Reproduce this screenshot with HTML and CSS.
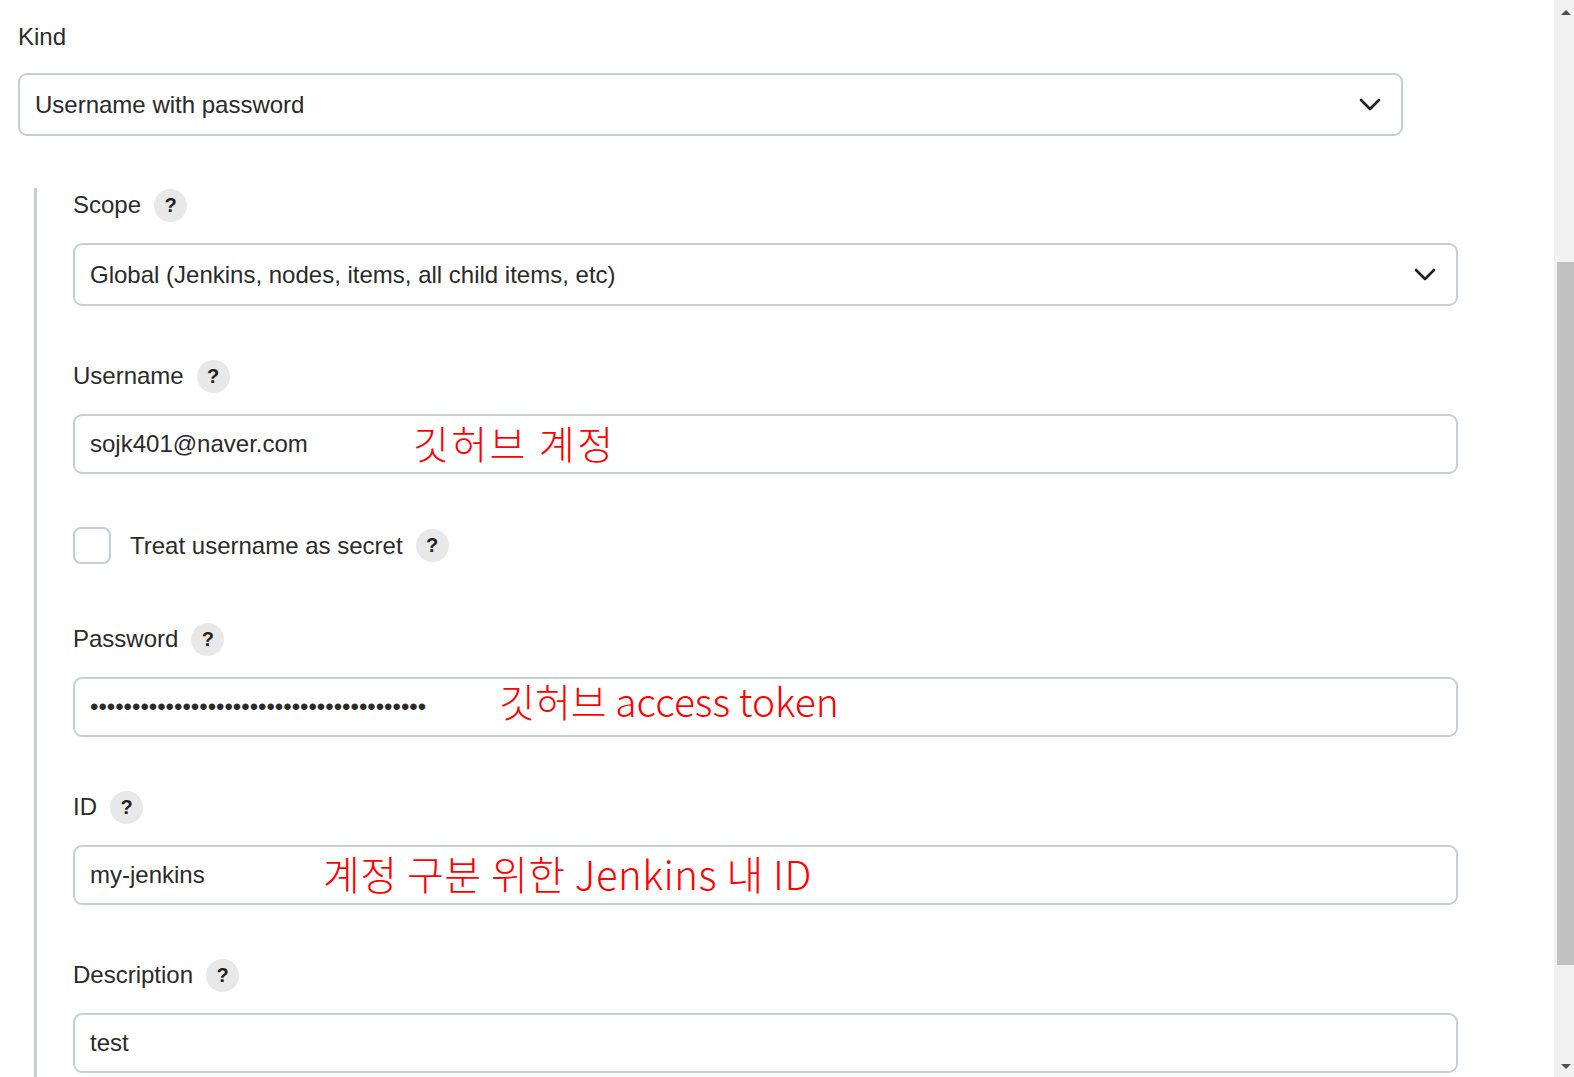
FILE: index.html
```html
<html>
  <head>
    <link rel="stylesheet" href="styles.css">
  </head>
  <body>
    <div class="page">
      <div class="main">
        <div class="kind_label">Kind</div>
        <div class="box select">
          <span>Username with password</span>
          <svg class="chevron" width="22" height="13" viewBox="0 0 22 13"><path d="M2 2 L11 11 L20 2" /></svg>
        </div>

        <div class="nested">
          <div class="field">
            <div class="label_row"><span>Scope</span><span class="help">?</span></div>
            <div class="box select">
              <span>Global (Jenkins, nodes, items, all child items, etc)</span>
              <svg class="chevron" width="22" height="13" viewBox="0 0 22 13"><path d="M2 2 L11 11 L20 2" /></svg>
            </div>
          </div><!-- scope -->

          <div class="field">
            <div class="label_row"><span>Username</span><span class="help">?</span></div>
            <div class="box">
              <span>sojk401@naver.com</span>
              <span class="note note_user">깃허브 계정</span>
            </div>
          </div><!-- username -->

          <div class="check_row">
            <span class="checkbox"></span>
            <span class="check_text">Treat username as secret</span>
            <span class="help">?</span>
          </div><!-- secret -->

          <div class="field">
            <div class="label_row"><span>Password</span><span class="help">?</span></div>
            <div class="box">
              <span class="dots">••••••••••••••••••••••••••••••••••••••••</span>
              <span class="note note_token">깃허브 access token</span>
            </div>
          </div><!-- password -->

          <div class="field">
            <div class="label_row"><span>ID</span><span class="help">?</span></div>
            <div class="box">
              <span>my-jenkins</span>
              <span class="note note_id">계정 구분 위한 Jenkins 내 ID</span>
            </div>
          </div><!-- id -->

          <div class="field">
            <div class="label_row"><span>Description</span><span class="help">?</span></div>
            <div class="box">
              <span>test</span>
            </div>
          </div><!-- description -->
        </div><!-- nested -->
      </div><!-- main -->

      <div class="scrollbar">
        <div class="arrow_box"><span class="arrow arrow_up"></span></div>
        <div class="thumb"></div>
        <div class="track_rest"></div>
        <div class="arrow_box arrow_box_down"><span class="arrow arrow_down"></span></div>
      </div><!-- scrollbar -->
    </div>
  </body>
</html>
```

FILE: styles.css
```css
body { margin: 0; background: #fff; font-family: "Liberation Sans", Arial, sans-serif; color: #2b2b2b; }

.page { display: flex; height: 1077px; overflow: hidden; }
.main { flex: 1; padding: 20px 0 0 18px; overflow: hidden; }

.kind_label { height: 34px; display: flex; align-items: center; font-size: 24px; margin-bottom: 19px; }

.box { position: relative; box-sizing: border-box; width: 1385px; height: 60px; display: flex; align-items: center; padding: 0 20px 0 15px; border: 2px solid #c7ced4; border-radius: 9px; font-size: 24px; color: #2a2a2a; }
.select { height: 63px; justify-content: space-between; padding-left: 15px; }

.chevron { fill: none; stroke: #1f1f1f; stroke-width: 2.6; stroke-linecap: round; stroke-linejoin: round; }

.nested { margin: 52px 0 0 16px; border-left: 3px solid #c9ced3; padding-left: 36px; padding-bottom: 40px; }

.field { margin-bottom: 53px; }
.label_row { height: 34px; display: flex; align-items: center; gap: 13px; font-size: 24px; margin-bottom: 21px; }

.help { width: 33px; height: 33px; border-radius: 50%; background: #e8e8e9; display: flex; align-items: center; justify-content: center; font-size: 20px; font-weight: bold; color: #222; }

.check_row { display: flex; align-items: center; height: 37px; margin-bottom: 58px; font-size: 24px; }
.checkbox { box-sizing: border-box; width: 38px; height: 37px; border: 2.5px solid #c7ced4; border-radius: 8px; margin-right: 19px; }
.check_text { margin-right: 13px; }

.dots { font-size: 24px; }

.note { position: absolute; top: 0; bottom: 0; display: flex; align-items: center; font-family: "Noto Sans CJK KR", sans-serif; font-size: 39px; font-weight: 300; line-height: 1; color: #ff0000; white-space: nowrap; margin-top: -4px; }
.note_user { left: 338px; letter-spacing: 2.4px; }
.note_token { left: 424px; bottom: 10px; }
.note_id { left: 248px; font-size: 40px; letter-spacing: 0.5px; }

.scrollbar { width: 20px; height: 1077px; background: #f1f1f1; display: flex; flex-direction: column; }
.arrow_box { height: 24px; display: flex; align-items: center; justify-content: center; padding-left: 3px; }
.arrow_box_down { height: 22px; }
.arrow { width: 0; height: 0; border-left: 5px solid transparent; border-right: 5px solid transparent; }
.arrow_up { border-bottom: 5px solid #505050; }
.arrow_down { border-top: 5px solid #505050; }
.thumb { margin: 238px 0 0 3px; height: 703px; background: #c1c1c1; }
.track_rest { flex: 1; }
```
